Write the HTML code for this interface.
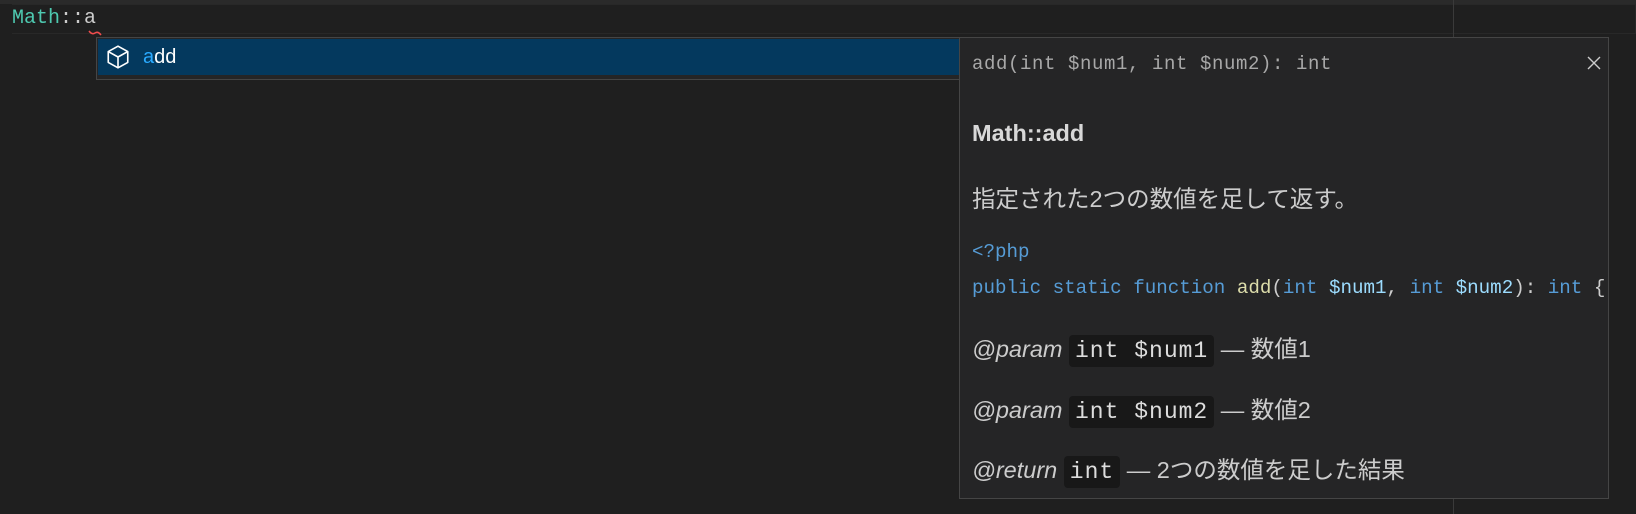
<!DOCTYPE html>
<html><head><meta charset="utf-8"><style>
*{margin:0;padding:0;box-sizing:border-box}
body{width:1636px;height:514px;background:#1f1f1f;position:relative;overflow:hidden;font-family:"Liberation Sans","Noto Sans CJK JP",sans-serif}
.mono{font-family:"Liberation Mono","Noto Sans CJK JP",monospace}
.top{position:absolute;left:0;top:0;width:1636px;height:4px;background:#2a2a2a}
.line{position:absolute;left:12px;top:4px;width:1624px;height:30px;border:1px solid #282828;border-left:none}
.ruler{position:absolute;left:1453px;top:0;width:1px;height:514px;background:#3a3a3a}
.code1{position:absolute;left:12px;top:4px;height:30px;line-height:30px;font-size:20px;color:#cccccc}
.sq{position:absolute;left:88px;top:30px}
.suggest{position:absolute;left:96px;top:37px;width:864px;height:43px;background:#252526;border:1px solid #454545}
.sel{position:absolute;left:1px;top:1px;right:0;height:36px;background:#04395e}
.sel .lbl{position:absolute;left:45px;top:0;line-height:36px;font-size:20px;color:#fff}
.panel{position:absolute;left:959px;top:37px;width:650px;height:462px;background:#252526;border:1px solid #454545;overflow:hidden;color:#cccccc}
.p{position:absolute;left:12px;white-space:nowrap}
.chip{background:#181818;border-radius:4px;padding:3px 6px;font-family:"Liberation Mono",monospace;font-size:23px;letter-spacing:1px;color:#dddddd}
i{font-style:italic}
</style></head><body>
<div class="top"></div>
<div class="line"></div>
<div class="ruler"></div>
<div class="code1 mono"><span style="color:#4ec9b0">Math</span>::a</div>
<svg class="sq" width="14" height="6"><path d="M1 1 Q4 5 7 3 Q10 1 13 5" stroke="#f14c4c" stroke-width="1.5" fill="none"/></svg>
<div class="suggest"><div class="sel">
<svg style="position:absolute;left:7px;top:5px" width="26" height="26" viewBox="0 0 24 24" fill="none" stroke="#fff" stroke-width="1.5" stroke-linejoin="round"><path d="M12 2 L21 7 L21 17 L12 22 L3 17 L3 7 Z"/><path d="M3 7 L12 12 L21 7 M12 12 L12 22"/></svg>
<div class="lbl"><span style="color:#2aaaff">a</span>dd</div></div></div>
<div class="panel">
<div class="p mono" style="top:15px;font-size:19px;letter-spacing:0.6px;color:#a8a8a8">add(int $num1, int $num2): int</div>
<svg style="position:absolute;left:626px;top:17px" width="16" height="16" viewBox="0 0 16 16" stroke="#cccccc" stroke-width="1.4"><path d="M2 2 L14 14 M14 2 L2 14"/></svg>
<div class="p" style="top:82px;font-size:23.5px;font-weight:bold;color:#d8d8d8">Math::add</div>
<div class="p" style="top:142px;font-size:23.5px">指定された2つの数値を足して返す。</div>
<div class="p mono" style="top:203px;font-size:19.2px;color:#569cd6">&lt;?php</div>
<div class="p mono" style="top:239px;font-size:19.2px;color:#569cd6">public static function <span style="color:#dcdcaa">add</span><span style="color:#ccc">(</span>int <span style="color:#9cdcfe">$num1</span><span style="color:#ccc">,</span> int <span style="color:#9cdcfe">$num2</span><span style="color:#ccc">):</span> int <span style="color:#ccc">{</span></div>
<div class="p" style="top:296px;font-size:23.5px;line-height:30px"><i>@param</i> <span class="chip">int $num1</span> — 数値1</div>
<div class="p" style="top:357px;font-size:23.5px;line-height:30px"><i>@param</i> <span class="chip">int $num2</span> — 数値2</div>
<div class="p" style="top:417px;font-size:23.5px;line-height:30px"><i>@return</i> <span class="chip">int</span> — 2つの数値を足した結果</div>
</div>
</body></html>
